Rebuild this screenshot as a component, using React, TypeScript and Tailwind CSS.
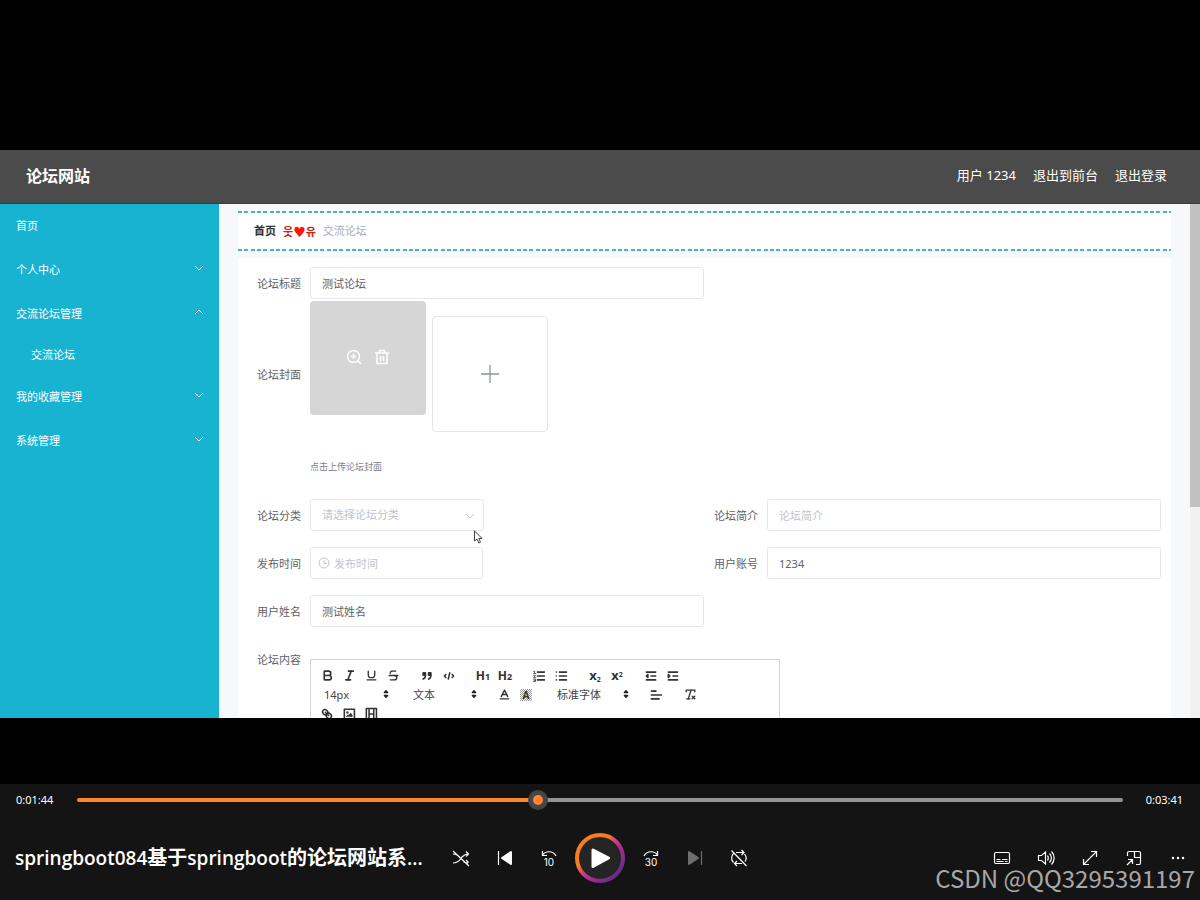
import React, { useState } from 'react';
import { Bold, Italic, Underline, Strikethrough, Baseline, RemoveFormatting } from 'lucide-react';

const menuItems = [
  { label: '首页' },
  { label: '个人中心', arrow: 'down' },
  { label: '交流论坛管理', arrow: 'up', children: ['交流论坛'] },
  { label: '我的收藏管理', arrow: 'down' },
  { label: '系统管理', arrow: 'down' },
];

const Chevron: React.FC<{ up?: boolean; className?: string }> = ({ up, className }) => (
  <svg viewBox="0 0 10 6" className={`w-[10px] h-[6px] ${className ?? ''}`} fill="none" stroke="currentColor" strokeWidth="1">
    <path d={up ? 'M1 5 5 1 9 5' : 'M1 1 5 5 9 1'} />
  </svg>
);

/* editor toolbar */

const QIcon: React.FC<{ children: React.ReactNode }> = ({ children }) => (
  <svg viewBox="0 0 18 18" className="w-[14px] h-[14px]" fill="none" stroke="currentColor" strokeWidth="2" strokeLinecap="round" strokeLinejoin="round">
    {children}
  </svg>
);

const Tool: React.FC<{ label: string; children: React.ReactNode }> = ({ label, children }) => (
  <button type="button" aria-label={label} className="w-[22px] h-[19px] flex items-center justify-center text-[#333]">
    {children}
  </button>
);

const Picker: React.FC<{ label: string; value: string; className: string }> = ({ label, value, className }) => (
  <div className={`relative h-[19px] ${className}`}>
    <select aria-label={label} className="block w-full h-[19px] appearance-none bg-transparent pl-2 text-[11px] leading-[19px] text-[#444] outline-none">
      <option>{value}</option>
    </select>
    <svg viewBox="0 0 18 18" className="absolute right-0 top-[2px] w-[14px] h-[14px] pointer-events-none" fill="#222" stroke="#222" strokeWidth="2" strokeLinejoin="round">
      <polygon points="7 11 9 13 11 11" />
      <polygon points="7 7 9 5 11 7" />
    </svg>
  </div>
);

const Toolbar: React.FC = () => (
  <div className="pl-[5px] pt-[6px]">
    <div className="flex gap-3">
      <div className="flex">
        <Tool label="Bold"><Bold className="w-[13px] h-[13px]" strokeWidth={3} /></Tool>
        <Tool label="Italic"><Italic className="w-[13px] h-[13px]" strokeWidth={3} /></Tool>
        <Tool label="Underline"><Underline className="w-[13px] h-[13px]" strokeWidth={2.5} /></Tool>
        <Tool label="Strike"><Strikethrough className="w-[13px] h-[13px]" strokeWidth={2.5} /></Tool>
      </div>
      <div className="flex">
        <Tool label="Blockquote">
          <QIcon>
            <rect x="4" y="5" width="3" height="3" fill="currentColor" />
            <rect x="11" y="5" width="3" height="3" fill="currentColor" />
            <path d="M7 8c0 4-3 5-3 5M14 8c0 4-3 5-3 5" />
          </QIcon>
        </Tool>
        <Tool label="Code block">
          <QIcon>
            <polyline points="5 7 3 9 5 11" />
            <polyline points="13 7 15 9 13 11" />
            <line x1="10" x2="8" y1="5" y2="13" />
          </QIcon>
        </Tool>
      </div>
      <div className="flex font-['Noto_Sans'] font-bold text-[12px]">
        <Tool label="Heading 1"><span>H<span className="text-[9px]">1</span></span></Tool>
        <Tool label="Heading 2"><span>H<span className="text-[9px]">2</span></span></Tool>
      </div>
      <div className="flex">
        <Tool label="Ordered list">
          <QIcon>
            <path d="M7 4h9M7 9h9M7 14h9" />
            <path d="M2 3h1.500v3M2 6h3M2 8.500h2.500L2 11h3M2 13h2.500v3H2M2.500 14.500h2" strokeWidth="1" />
          </QIcon>
        </Tool>
        <Tool label="Bullet list">
          <QIcon>
            <path d="M7 4h9M7 9h9M7 14h9M3 4h.01M3 9h.01M3 14h.01" />
          </QIcon>
        </Tool>
      </div>
      <div className="flex font-['Noto_Sans'] font-bold text-[13px]">
        <Tool label="Subscript"><span className="leading-none">x<sub className="text-[7px]">2</sub></span></Tool>
        <Tool label="Superscript"><span className="leading-none">x<sup className="text-[7px]">2</sup></span></Tool>
      </div>
      <div className="flex">
        <Tool label="Outdent">
          <QIcon>
            <path d="M3 4h12M9 9h6M3 14h12" />
            <polygon points="5 7 5 11 3 9" fill="currentColor" />
          </QIcon>
        </Tool>
        <Tool label="Indent">
          <QIcon>
            <path d="M3 4h12M9 9h6M3 14h12" />
            <polygon points="3 7 3 11 5 9" fill="currentColor" />
          </QIcon>
        </Tool>
      </div>
    </div>

    <div className="flex gap-3">
      <Picker label="字号" value="14px" className="w-[77px]" />
      <Picker label="标题" value="文本" className="w-[76px]" />
      <div className="flex">
        <Tool label="Color"><Baseline className="w-[13px] h-[13px]" strokeWidth={2.5} /></Tool>
        <Tool label="Background">
          <span className="w-[12px] h-[12px] flex items-center justify-center font-['Noto_Sans'] font-bold text-[10px] leading-none bg-[repeating-conic-gradient(#999_0_25%,#fff_0_50%)] bg-[length:2px_2px]">A</span>
        </Tool>
      </div>
      <Picker label="字体" value="标准字体" className="w-[84px]" />
      <Tool label="Align">
        <QIcon><path d="M3 4h6M3 9h13M3 14h10" /></QIcon>
      </Tool>
      <Tool label="Clean"><RemoveFormatting className="w-[13px] h-[13px]" strokeWidth={2.5} /></Tool>
    </div>

    <div className="flex">
      <Tool label="Link">
        <QIcon>
          <line x1="7" x2="11" y1="7" y2="11" />
          <path d="M8.900 4.577a3.476 3.476 0 0 1 .36 4.679A3.476 3.476 0 0 1 4.577 8.900C3.185 7.500 2.035 6.400 4.217 4.217S7.500 3.185 8.900 4.577Z" />
          <path d="M13.423 9.100a3.476 3.476 0 0 0-4.679-.36 3.476 3.476 0 0 0 .36 4.679c1.392 1.392 2.500 2.542 4.679.36S14.815 10.500 13.423 9.100Z" />
        </QIcon>
      </Tool>
      <Tool label="Image">
        <QIcon>
          <rect x="3" y="3" width="13" height="12" />
          <circle cx="7" cy="7" r="0.600" fill="currentColor" />
          <polygon points="6 12 8 10 9 11 11 8 13 10 13 12" fill="currentColor" strokeWidth="1" />
        </QIcon>
      </Tool>
      <Tool label="Video">
        <QIcon>
          <rect x="3" y="2" width="13" height="14" />
          <path d="M6.500 3v12M12.500 3v12M7 9h5" />
        </QIcon>
      </Tool>
    </div>
  </div>
);

/* form */

const inputClass = 'w-full h-8 rounded-[3px] border border-[#e4e6eb] bg-white px-[11px] text-[11px] text-[#606266] placeholder:text-[#c0c4cc] outline-none';
const labelClass = 'w-[63px] h-8 pr-[9px] shrink-0 text-right text-[11px] leading-[34px] text-[#606266] whitespace-nowrap';

const Field: React.FC<{ id: string; label: string; className?: string; children: React.ReactNode }> = ({ id, label, className, children }) => (
  <div className={`flex ${className ?? ''}`}>
    <label htmlFor={id} className={labelClass}>{label}</label>
    <div className="flex-1 min-w-0">{children}</div>
  </div>
);

const DashedLine = () => (
  <div className="h-[2px] bg-[repeating-linear-gradient(90deg,#4db1bf_0_4px,#eefafb_4px_6px,#4db1bf_6px_10px,#eefafb_10px_13px,#4db1bf_13px_17px,#eefafb_17px_19px)]" />
);

const ForumForm: React.FC = () => (
  <form className="bg-white mt-[7px] px-[9px] pr-[10px] pt-[9px]">
    <div className="grid grid-cols-2">
      <Field id="title" label="论坛标题">
        <input id="title" defaultValue="测试论坛" className={inputClass} />
      </Field>
    </div>

    <div className="flex mt-[2px]">
      <label htmlFor="cover" className="w-[63px] pr-[9px] shrink-0 text-right text-[11px] leading-[148px] text-[#606266] whitespace-nowrap">论坛封面</label>
      <div>
        <div className="flex gap-[6px]">
          <div className="w-[116px] h-[114px] rounded-[4px] bg-[#d6d6d6] flex items-center justify-center gap-3 pb-[2px] text-white">
            <button type="button" aria-label="预览">
              <svg viewBox="0 0 16 16" className="w-4 h-4" fill="none" stroke="currentColor" strokeWidth="1.500">
                <circle cx="7.500" cy="7.500" r="6" />
                <path d="M12 12 15 15M5 7.500h5M7.500 5v5" />
              </svg>
            </button>
            <button type="button" aria-label="删除">
              <svg viewBox="0 0 16 16" className="w-4 h-4" fill="none" stroke="currentColor" strokeWidth="1.500">
                <path d="M1 4h14M5.500 4V1.500h5V4M3 4v10.500h10V4M6.500 7v5M9.500 7v5" />
              </svg>
            </button>
          </div>
          <button id="cover" type="button" aria-label="上传" className="mt-[15px] w-[116px] h-[116px] rounded-[4px] border border-[#e4e6eb] flex items-center justify-center text-[#8c939d]">
            <svg viewBox="0 0 18 18" className="w-[18px] h-[18px]" stroke="currentColor" strokeWidth="1.300">
              <path d="M9 0v18M0 9h18" />
            </svg>
          </button>
        </div>
        <p className="mt-7 pb-[25px] text-[9px] leading-[14px] text-[#7c8088]">点击上传论坛封面</p>
      </div>
    </div>

    <div className="grid grid-cols-2 gap-y-4">
      <Field id="category" label="论坛分类">
        <div className="relative w-[174px]">
          <select id="category" className={`${inputClass} appearance-none !text-[#c0c4cc]`}>
            <option>请选择论坛分类</option>
          </select>
          <Chevron className="absolute right-[9px] top-[14px] text-[#c0c4cc] pointer-events-none" />
          {/* mouse pointer */}
          <svg viewBox="0 0 9 14" className="absolute left-[164px] top-[31px] w-[9px] h-[14px] pointer-events-none" fill="#fff" stroke="#444" strokeWidth="1">
            <path d="M.500 1v10l2.500-2 1.800 4 1.700-.8L4.800 8.500h3.400Z" />
          </svg>
        </div>
      </Field>
      <Field id="intro" label="论坛简介">
        <input id="intro" placeholder="论坛简介" className={inputClass} />
      </Field>
      <Field id="time" label="发布时间">
        <div className="relative w-[173px]">
          <input id="time" placeholder="发布时间" className={`${inputClass} !pl-[23px]`} />
          <svg viewBox="0 0 12 12" className="absolute left-2 top-[10px] w-3 h-3 text-[#c0c4cc] pointer-events-none" fill="none" stroke="currentColor" strokeWidth="1">
            <circle cx="6" cy="6" r="5" />
            <path d="M6 3v3.500h3" />
          </svg>
        </div>
      </Field>
      <Field id="account" label="用户账号">
        <input id="account" defaultValue="1234" className={inputClass} />
      </Field>
      <Field id="name" label="用户姓名">
        <input id="name" defaultValue="测试姓名" className={inputClass} />
      </Field>
      <Field id="content" label="论坛内容" className="col-span-2">
        <div id="content" className="mt-4 w-[470px] h-[240px] border border-[#d4d4d4]">
          <Toolbar />
        </div>
      </Field>
    </div>
  </form>
);

const ForumAdmin: React.FC = () => (
  <div className="flex-1 min-h-0 flex flex-col bg-[#f6f8fa] overflow-hidden">
    <header className="h-[54px] shrink-0 flex items-center justify-between pl-[26px] pr-[33px] pb-[2px] bg-[#4b4b4b] border-b border-[#3a3a3a] text-white">
      <h1 className="text-base font-bold">论坛网站</h1>
      <div className="flex gap-[17px] text-[13px]">
        <span>用户 1234</span>
        <a href="#front">退出到前台</a>
        <a href="#logout">退出登录</a>
      </div>
    </header>

    <div className="flex-1 min-h-0 flex">
      <nav className="w-[219px] shrink-0 bg-[#17b3d1] text-[11px] text-white">
        {menuItems.map((item) => (
          <div key={item.label}>
            <a href="#menu" className="h-11 pl-4 pr-[15px] flex items-center justify-between">
              {item.label}
              {item.arrow && <Chevron up={item.arrow === 'up'} className="mb-1" />}
            </a>
            {item.children?.map((child) => (
              <a key={child} href="#forum" className="h-[39px] pl-[31px] flex items-center">{child}</a>
            ))}
          </div>
        ))}
      </nav>

      <main className="flex-1 min-w-0 pl-[19px] pr-[19px] pt-[7px] overflow-hidden">
        <div className="bg-white">
          <DashedLine />
          <div className="h-9 pl-4 pt-px flex items-center text-[11px]">
            <a href="#home" className="font-bold text-[#303133]">首页</a>
            <span className="mx-[7px] flex items-center text-[#d0200f] font-['Noto_Sans_CJK_KR'] font-bold">
              웃<span className="text-[#ff1400] text-[14px] leading-none font-['DejaVu_Sans']">♥</span>유
            </span>
            <span className="text-[#a8adba]">交流论坛</span>
          </div>
          <DashedLine />
        </div>
        <ForumForm />
      </main>

      <div className="w-[10px] shrink-0 bg-[#f1f1f1]">
        <div className="h-[59%] bg-[#c1c1c1]" />
      </div>
    </div>
  </div>
);

/* player */

const PIcon: React.FC<{ children: React.ReactNode }> = ({ children }) => (
  <svg viewBox="0 0 18 18" className="w-[18px] h-[18px]" fill="none" stroke="currentColor" strokeWidth="1.200">
    {children}
  </svg>
);

const Control: React.FC<{ label: string; className?: string; children: React.ReactNode }> = ({ label, className, children }) => (
  <button type="button" aria-label={label} className={`w-11 h-11 flex items-center justify-center ${className ?? ''}`}>
    {children}
  </button>
);

const Player: React.FC = () => {
  const [position, setPosition] = useState(440);

  return (
    <footer className="h-[116px] shrink-0 relative bg-[#141414] border-b border-[#1b1015] text-white">
      <div className="h-8 flex items-center pl-4 pr-[17px] text-[11px]">
        <span className="w-[61px]">0:01:44</span>
        <input
          type="range"
          aria-label="Seek"
          min={0}
          max={1000}
          value={position}
          onChange={(e) => setPosition(Number(e.target.value))}
          style={{ '--played': `${position / 10}%` } as React.CSSProperties}
          className="flex-1 min-w-0 h-5 appearance-none bg-transparent outline-none [&::-webkit-slider-runnable-track]:h-1 [&::-webkit-slider-runnable-track]:rounded-full [&::-webkit-slider-runnable-track]:bg-[linear-gradient(90deg,#ff8533_var(--played),#949494_var(--played))] [&::-webkit-slider-thumb]:appearance-none [&::-webkit-slider-thumb]:w-5 [&::-webkit-slider-thumb]:h-5 [&::-webkit-slider-thumb]:-mt-2 [&::-webkit-slider-thumb]:rounded-full [&::-webkit-slider-thumb]:border-5 [&::-webkit-slider-thumb]:border-[#454545] [&::-webkit-slider-thumb]:bg-[#ff8533]"
        />
        <span className="w-[60px] text-right">0:03:41</span>
      </div>

      <div className="flex items-center pt-[17px]">
        <div className="flex-1 min-w-0">
          <p className="pl-[15px] whitespace-nowrap text-[19px] leading-7 font-semibold font-['Open_Sans','Noto_Sans_CJK_SC',sans-serif]">
            springboot084<span className="text-[20px]">基于</span>springboot<span className="text-[20px]">的论坛网站系</span>...
          </p>
        </div>

        <div className="flex items-center">
          <Control label="Shuffle off">
            <PIcon>
              <path d="M1 2 17 17M1 14c5 0 7-3 9-6 2-2 3-3 6-3M14 2.500 16.500 5 14 7.500M1 5c3 0 5 1 7 4M11.500 12.500c1 1 2.500 1.500 4.500 1.500M14 11l2.500 2.500" />
            </PIcon>
          </Control>
          <Control label="Previous">
            <PIcon>
              <path d="M2.500 2v14" />
              <path d="M15 3v12L6 9Z" fill="currentColor" strokeWidth="2" strokeLinejoin="round" />
            </PIcon>
          </Control>
          <Control label="Back 10 seconds">
            <span className="relative w-[18px] h-[18px] flex items-end justify-center text-[10px] leading-[10px] font-['Inter']">
              <svg viewBox="0 0 18 8" className="absolute left-0 top-[1px] w-[18px] h-2" fill="none" stroke="currentColor" strokeWidth="1.200">
                <path d="M2.500 1v4.500H7M2.500 5C5 1 13 0 16 6" />
              </svg>
              10
            </span>
          </Control>
          <div className="w-[58px] flex justify-center">
            <button type="button" aria-label="Play" className="w-[50px] h-[50px]">
              <svg viewBox="0 0 50 50" className="w-[50px] h-[50px]">
                <defs>
                  <linearGradient id="ring" x1="0.150" y1="0.150" x2="0.850" y2="0.850">
                    <stop offset="0.300" stopColor="#f57c20" />
                    <stop offset="0.450" stopColor="#d9437a" />
                    <stop offset="0.600" stopColor="#b72d92" />
                    <stop offset="1" stopColor="#6b2c86" />
                  </linearGradient>
                </defs>
                <circle cx="25" cy="25" r="23" fill="#242424" stroke="url(#ring)" strokeWidth="4" />
                <path d="M18 17v16.500L33.500 25Z" fill="#fff" stroke="#fff" strokeWidth="3" strokeLinejoin="round" />
              </svg>
            </button>
          </div>
          <Control label="Forward 30 seconds">
            <span className="relative w-[18px] h-[18px] flex items-end justify-center text-[10px] leading-[10px] font-['Inter']">
              <svg viewBox="0 0 18 8" className="absolute left-0 top-[1px] w-[18px] h-2" fill="none" stroke="currentColor" strokeWidth="1.200">
                <path d="M15.500 1v4.500H11M15.500 5C13 1 5 0 2 6" />
              </svg>
              30
            </span>
          </Control>
          <Control label="Next" className="text-[#6e6e6e]">
            <PIcon>
              <path d="M15.500 2v14" />
              <path d="M3 3v12L12 9Z" fill="currentColor" strokeWidth="2" strokeLinejoin="round" />
            </PIcon>
          </Control>
          <Control label="Repeat off">
            <PIcon>
              <path d="M1.500 1.500 16.500 17M6 3.500h8M11.500 1 14 3.500 11.500 6M14.500 5c2 2.500 2 5.500.5 7.500M12 14.500H4.500M7 12l-2.500 2.500L7 17M3.500 13.500C1 11 1 7 3.500 4.500" />
            </PIcon>
          </Control>
        </div>

        <div className="flex-1 flex justify-end">
          <Control label="Subtitles">
            <PIcon>
              <rect x="1.500" y="3.500" width="15" height="11" rx="1.500" />
              <path d="M3.500 10.500h4M9 10.500h5.500M3.500 12.500h7M12 12.500h2.500" />
            </PIcon>
          </Control>
          <Control label="Volume">
            <PIcon>
              <path d="M1.500 6.500h3L8.500 3v12L4.500 11.500h-3ZM10.500 6.500c1 1.500 1 3.500 0 5M12.500 4.500c2.500 2.500 2.500 6.500 0 9M14.500 2.500c3.500 3.500 3.500 9.500 0 13" />
            </PIcon>
          </Control>
          <Control label="Full screen">
            <PIcon><path d="M2.500 15.500l13-13M10 2.500h5.500V8M2.500 10v5.500H8" /></PIcon>
          </Control>
          <Control label="Mini player">
            <PIcon>
              <path d="M2.500 7V4a1.500 1.500 0 0 1 1.500-1.500h10A1.500 1.500 0 0 1 15.500 4v10a1.500 1.500 0 0 1-1.500 1.500h-3M9.500 2.500v6h6M2 16l5.500-5.500M3 10.500h4.500V15" />
            </PIcon>
          </Control>
          <Control label="More">
            <PIcon>
              <path d="M4 9h.01M9 9h.01M14 9h.01" strokeWidth="2.500" strokeLinecap="round" />
            </PIcon>
          </Control>
        </div>
      </div>

      <span className="absolute right-[5px] bottom-[7px] text-[24px] leading-7 text-[#a8a8a8] pointer-events-none font-['Noto_Sans_CJK_SC']">CSDN @QQ3295391197</span>
    </footer>
  );
};

const App: React.FC = () => (
  <div className="h-screen flex flex-col bg-black font-['Noto_Sans','Noto_Sans_CJK_SC',sans-serif]">
    <div className="flex-1 min-h-0 flex flex-col pt-[150px] pb-[66px]">
      <ForumAdmin />
    </div>
    <Player />
  </div>
);

export default App;
